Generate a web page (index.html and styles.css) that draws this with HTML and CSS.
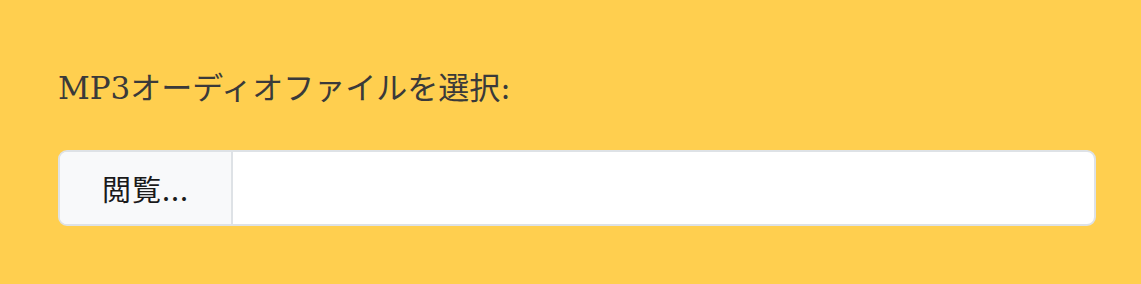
FILE: index.html
```html
<!DOCTYPE html>
<html lang="ja">
<head>
<meta charset="utf-8">
<link rel="stylesheet" href="styles.css">
</head>
<body>
<div class="wrap">
  <label class="label" for="f">MP3オーディオファイルを選択:</label>
  <div class="file">
    <span class="browse">閲覧...</span>
    <span class="name"></span>
  </div>
</div>
</body>
</html>
```
FILE: styles.css
```css
html, body { margin: 0; padding: 0; }
body {
  background: #ffcf4f;
  width: 1141px;
  height: 284px;
  overflow: hidden;
}
.wrap {
  padding: 66px 45px 0 58px;
}
.label {
  display: block;
  font-family: "DejaVu Serif", "Noto Sans CJK JP", serif;
  font-size: 31px;
  line-height: 44px;
  color: #3a3a3a;
  margin-bottom: 40px;
}
.file {
  display: flex;
  height: 76px;
  box-sizing: border-box;
  border: 2px solid #dee2e6;
  border-radius: 9px;
  background: #fff;
  overflow: hidden;
}
.browse {
  width: 171px;
  flex: none;
  display: flex;
  align-items: center;
  justify-content: center;
  background: #f8f9fa;
  border-right: 2px solid #dee2e6;
  font-family: "Noto Sans CJK JP", sans-serif;
  font-size: 29px;
  letter-spacing: 1px;
  color: #1a1a1a;
}
.name { flex: 1; }
```
